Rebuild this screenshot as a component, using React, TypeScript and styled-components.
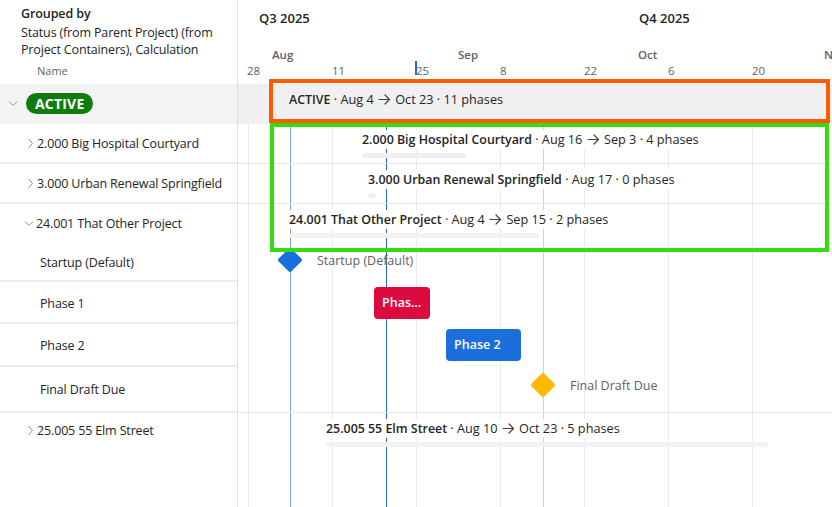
import React from "react";
import styled, { createGlobalStyle } from "styled-components";

const GlobalStyle = createGlobalStyle`
  html, body { margin: 0; padding: 0; background: #ffffff; }
  body { font-family: "Segoe UI", "Open Sans", "Noto Sans", sans-serif; color: #242424; }
  * { box-sizing: border-box; }
`;

const DAY = 6;
const ORIGIN = Date.UTC(2025, 6, 28);
const X0 = 10;
const xOf = (m: number, d: number) =>
  X0 + Math.round((Date.UTC(2025, m - 1, d) - ORIGIN) / 86400000) * DAY;

/* ---------- layout ---------- */
const Page = styled.div`
  display: flex;
  width: 832px;
  height: 507px;
  overflow: hidden;
  position: relative;
`;

const LeftPanel = styled.div`
  width: 238px;
  flex: none;
  border-right: 1px solid #e0e0e0;
  display: flex;
  flex-direction: column;
`;

const LeftHeader = styled.div`
  height: 84px;
  padding: 5px 0 0 21px;
  display: flex;
  flex-direction: column;
`;

const GroupedTitle = styled.div`
  font-size: 12.5px;
  font-weight: 600;
  line-height: 18px;
  letter-spacing: -0.1px;
  color: #242424;
`;

const GroupedDesc = styled.div`
  font-size: 12.5px;
  line-height: 17px;
  letter-spacing: -0.15px;
  margin-top: 1px;
  color: #242424;
`;

const ColumnName = styled.div`
  font-size: 11px;
  color: #616161;
  margin: 5px 0 0 16px;
`;

const LeftRow = styled.div<{ $h: number; $border?: boolean; $gray?: boolean; $indent: number; $shift?: number }>`
  height: ${(p) => p.$h}px;
  display: flex;
  align-items: center;
  padding-left: ${(p) => p.$indent}px;
  padding-top: ${(p) => p.$shift ?? 0}px;
  background: ${(p) => (p.$gray ? "#f3f3f3" : "transparent")};
  border-bottom: ${(p) => (p.$border ? "2px solid #ededed" : "2px solid transparent")};
  font-size: 12.5px;
  letter-spacing: -0.15px;
  color: #242424;
  white-space: nowrap;
`;

const ChevronBox = styled.span`
  width: 10px;
  display: inline-flex;
  justify-content: center;
  margin-right: 2px;
`;

const StatusPill = styled.span`
  margin-left: 6px;
  background: #107c10;
  color: #ffffff;
  font-weight: 700;
  font-size: 14px;
  height: 21px;
  line-height: 21px;
  padding: 0 9px;
  border-radius: 11px;
  letter-spacing: 0.2px;
`;

const ChildLabel = styled.span`
  padding-left: 3px;
`;

/* ---------- chart ---------- */
const Chart = styled.div`
  flex: 1;
  position: relative;
  display: flex;
  flex-direction: column;
`;

const ChartHeader = styled.div`
  height: 84px;
  display: flex;
  flex-direction: column;
`;

const ScaleRow = styled.div<{ $h: number }>`
  position: relative;
  height: ${(p) => p.$h}px;
`;

const QuarterLabel = styled.span`
  position: absolute;
  top: 9px;
  font-size: 13px;
  font-weight: 600;
  color: #242424;
`;

const MonthLabel = styled.span`
  position: absolute;
  top: 7px;
  font-size: 11.5px;
  font-weight: 600;
  color: #616161;
`;

const DayLabel = styled.span`
  position: absolute;
  top: 0px;
  font-size: 11.5px;
  color: #616161;
`;

const TodayTick = styled.span`
  position: absolute;
  top: -2px;
  width: 2px;
  height: 14px;
  background: #1f6fd1;
`;

const ChartBody = styled.div`
  position: relative;
  flex: 1;
`;

const LinesLayer = styled.div`
  position: absolute;
  inset: 40px 0 0 0;
  pointer-events: none;
`;

const VLine = styled.div<{ $color: string; $w?: number }>`
  position: absolute;
  top: 0;
  bottom: 0;
  width: ${(p) => p.$w ?? 1}px;
  background: ${(p) => p.$color};
`;

const ChartRow = styled.div<{ $h: number; $border?: boolean; $gray?: boolean }>`
  position: relative;
  z-index: 1;
  height: ${(p) => p.$h}px;
  background: ${(p) => (p.$gray ? "#f0f0f0" : "transparent")};
  border-bottom: 1px solid ${(p) => (p.$border ? "#e8e8e8" : "transparent")};
`;

const Summary = styled.div`
  position: absolute;
  top: 6px;
  display: flex;
  flex-direction: column;
  align-items: flex-start;
`;

const SummaryText = styled.span`
  font-size: 12.7px;
  line-height: 18px;
  color: #242424;
  background: #ffffff;
  white-space: nowrap;
  padding-right: 2px;
`;

const GroupText = styled(SummaryText)`
  background: transparent;
`;

const Strong = styled.b`
  font-weight: 600;
  font-size: 12.4px;
`;

const ArrowIcon = styled.svg`
  display: inline-block;
  vertical-align: -1px;
  margin: 0 1px;
`;

const SummaryBar = styled.div<{ $color: string }>`
  height: 5px;
  margin-top: 4px;
  border-radius: 3px;
  background: ${(p) => p.$color};
`;

const Milestone = styled.div<{ $top: number }>`
  position: absolute;
  top: ${(p) => p.$top}px;
  display: flex;
  align-items: center;
  height: 26px;
`;

const Diamond = styled.span<{ $color: string }>`
  width: 18px;
  height: 18px;
  margin: 0 4px;
  background: ${(p) => p.$color};
  border-radius: 2px;
  transform: rotate(45deg);
`;

const MilestoneLabel = styled.span`
  margin-left: 14px;
  font-size: 12.5px;
  color: #616161;
  white-space: nowrap;
`;

const PhaseBar = styled.div<{ $color: string }>`
  position: absolute;
  top: 5px;
  height: 32px;
  border-radius: 4px;
  background: ${(p) => p.$color};
  color: #ffffff;
  font-size: 12.5px;
  font-weight: 600;
  line-height: 32px;
  padding: 0 8px;
  white-space: nowrap;
  overflow: hidden;
  text-overflow: ellipsis;
`;

const Annotation = styled.div<{ $color: string }>`
  position: absolute;
  z-index: 5;
  border: 4px solid ${(p) => p.$color};
  pointer-events: none;
`;

/* ---------- icons ---------- */
const ChevronRight = () => (
  <svg width="7" height="11" viewBox="0 0 7 11">
    <path d="M1.5 1 L5.5 5.5 L1.5 10" fill="none" stroke="#8a8a8a" strokeWidth="1" />
  </svg>
);
const ChevronDown = () => (
  <svg width="11" height="7" viewBox="0 0 11 7">
    <path d="M1 1.5 L5.5 5.5 L10 1.5" fill="none" stroke="#8a8a8a" strokeWidth="1" />
  </svg>
);
const Arrow = () => (
  <ArrowIcon width="13" height="11" viewBox="0 0 13 11">
    <path d="M1 5.5 H11.5 M7 1 L11.5 5.5 L7 10" fill="none" stroke="#424242" strokeWidth="1.2" strokeLinecap="round" strokeLinejoin="round" />
  </ArrowIcon>
);

/* ---------- data ---------- */
const months = [
  { label: "Aug", x: xOf(8, 1) },
  { label: "Sep", x: xOf(9, 1) },
  { label: "Oct", x: xOf(10, 1) },
  { label: "Nov", x: xOf(11, 1) },
];
const days = [
  { label: "28", x: xOf(7, 28) - 1 },
  { label: "11", x: xOf(8, 11) },
  { label: "25", x: xOf(8, 25) },
  { label: "8", x: xOf(9, 8) },
  { label: "22", x: xOf(9, 22) },
  { label: "6", x: xOf(10, 6) },
  { label: "20", x: xOf(10, 20) },
];
const gridXs = [xOf(7, 28), xOf(8, 11), xOf(8, 25), xOf(9, 8), xOf(9, 22), xOf(10, 6), xOf(10, 20)];

const H = { group: 40, p1: 40, p2: 40, p3: 40, startup: 38, ph1: 42, ph2: 43, final: 46, elm: 60 };

const Range = ({ from, to }: { from: string; to: string }) => (
  <>
    {" · "}
    {from} <Arrow /> {to}
  </>
);

export default function App() {
  return (
    <>
      <GlobalStyle />
      <Page>
        <LeftPanel>
          <LeftHeader>
            <GroupedTitle>Grouped by</GroupedTitle>
            <GroupedDesc>
              Status (from Parent Project) (from
              <br />
              Project Containers), Calculation
            </GroupedDesc>
            <ColumnName>Name</ColumnName>
          </LeftHeader>
          <LeftRow $h={H.group} $gray $indent={8}>
            <ChevronBox>
              <ChevronDown />
            </ChevronBox>
            <StatusPill>ACTIVE</StatusPill>
          </LeftRow>
          <LeftRow $h={H.p1} $border $indent={25}>
            <ChevronBox>
              <ChevronRight />
            </ChevronBox>
            2.000 Big Hospital Courtyard
          </LeftRow>
          <LeftRow $h={H.p2} $border $indent={25}>
            <ChevronBox>
              <ChevronRight />
            </ChevronBox>
            3.000 Urban Renewal Springfield
          </LeftRow>
          <LeftRow $h={H.p3} $indent={24}>
            <ChevronBox>
              <ChevronDown />
            </ChevronBox>
            24.001 That Other Project
          </LeftRow>
          <LeftRow $h={H.startup} $border $indent={37}>
            <ChildLabel>Startup (Default)</ChildLabel>
          </LeftRow>
          <LeftRow $h={H.ph1} $border $indent={37} $shift={3}>
            <ChildLabel>Phase 1</ChildLabel>
          </LeftRow>
          <LeftRow $h={H.ph2} $border $indent={37} $shift={2}>
            <ChildLabel>Phase 2</ChildLabel>
          </LeftRow>
          <LeftRow $h={H.final} $border $indent={37}>
            <ChildLabel>Final Draft Due</ChildLabel>
          </LeftRow>
          <LeftRow $h={36} $indent={25}>
            <ChevronBox>
              <ChevronRight />
            </ChevronBox>
            25.005 55 Elm Street
          </LeftRow>
        </LeftPanel>

        <Chart>
          <ChartHeader>
            <ScaleRow $h={40}>
              <QuarterLabel style={{ left: 21 }}>Q3 2025</QuarterLabel>
              <QuarterLabel style={{ left: xOf(10, 1) + 1 }}>Q4 2025</QuarterLabel>
            </ScaleRow>
            <ScaleRow $h={23}>
              {months.map((m) => (
                <MonthLabel key={m.label} style={{ left: m.x }}>
                  {m.label}
                </MonthLabel>
              ))}
            </ScaleRow>
            <ScaleRow $h={21}>
              {days.map((d) => (
                <DayLabel key={d.label} style={{ left: d.x }}>
                  {d.label}
                </DayLabel>
              ))}
              <TodayTick style={{ left: xOf(8, 25) - 1 }} />
            </ScaleRow>
          </ChartHeader>

          <ChartBody>
            <LinesLayer>
              {gridXs.map((x) => (
                <VLine key={x} $color="#ececec" style={{ left: x }} />
              ))}
              <VLine $color="#7ea3dc" style={{ left: xOf(8, 4) }} />
              <VLine $color="#f2d46a" style={{ left: xOf(9, 15) + 1 }} />
              <VLine $color="#2a67c4" style={{ left: xOf(8, 20) }} />
            </LinesLayer>

            <ChartRow $h={H.group} $gray>
              <Summary style={{ left: xOf(8, 4) - 1 }}>
                <GroupText>
                  <Strong>ACTIVE</Strong>
                  <Range from="Aug 4" to="Oct 23" /> · 11 phases
                </GroupText>
              </Summary>
            </ChartRow>
            <ChartRow $h={H.p1} $border>
              <Summary style={{ left: xOf(8, 16) }}>
                <SummaryText>
                  <Strong>2.000 Big Hospital Courtyard</Strong>
                  <Range from="Aug 16" to="Sep 3" /> · 4 phases
                </SummaryText>
                <SummaryBar $color="#eef0f3" style={{ width: xOf(9, 3) - xOf(8, 16) - 4 }} />
              </Summary>
            </ChartRow>
            <ChartRow $h={H.p2} $border>
              <Summary style={{ left: xOf(8, 17) }}>
                <SummaryText>
                  <Strong>3.000 Urban Renewal Springfield</Strong> · Aug 17 · 0 phases
                </SummaryText>
                <SummaryBar $color="#eef0f3" style={{ width: 8 }} />
              </Summary>
            </ChartRow>
            <ChartRow $h={H.p3}>
              <Summary style={{ left: xOf(8, 4) - 1 }}>
                <SummaryText>
                  <Strong>24.001 That Other Project</Strong>
                  <Range from="Aug 4" to="Sep 15" /> · 2 phases
                </SummaryText>
                <SummaryBar $color="#f1f2f4" style={{ width: xOf(9, 15) - xOf(8, 4) - 2 }} />
              </Summary>
            </ChartRow>
            <ChartRow $h={H.startup}>
              <Milestone $top={3} style={{ left: xOf(8, 4) - 13 }}>
                <Diamond $color="#1a6fdc" />
                <MilestoneLabel>Startup (Default)</MilestoneLabel>
              </Milestone>
            </ChartRow>
            <ChartRow $h={H.ph1}>
              <PhaseBar $color="#dc0a3f" style={{ left: xOf(8, 18), width: 56 }}>
                Phase 1
              </PhaseBar>
            </ChartRow>
            <ChartRow $h={H.ph2}>
              <PhaseBar $color="#1a6fdc" style={{ left: xOf(8, 31) - 6, width: 75 }}>
                Phase 2
              </PhaseBar>
            </ChartRow>
            <ChartRow $h={H.final} $border>
              <Milestone $top={5} style={{ left: xOf(9, 15) - 12 }}>
                <Diamond $color="#ffb900" />
                <MilestoneLabel>Final Draft Due</MilestoneLabel>
              </Milestone>
            </ChartRow>
            <ChartRow $h={H.elm}>
              <Summary style={{ left: xOf(8, 10) }}>
                <SummaryText>
                  <Strong>25.005 55 Elm Street</Strong>
                  <Range from="Aug 10" to="Oct 23" /> · 5 phases
                </SummaryText>
                <SummaryBar $color="#f1f2f4" style={{ width: xOf(10, 23) - xOf(8, 10) - 2 }} />
              </Summary>
            </ChartRow>

            <Annotation $color="#fe5b00" style={{ left: 31, top: -5, width: 561, height: 44 }} />
            <Annotation $color="#33dd11" style={{ left: 32, top: 39, width: 559, height: 129 }} />
          </ChartBody>
        </Chart>
      </Page>
    </>
  );
}
